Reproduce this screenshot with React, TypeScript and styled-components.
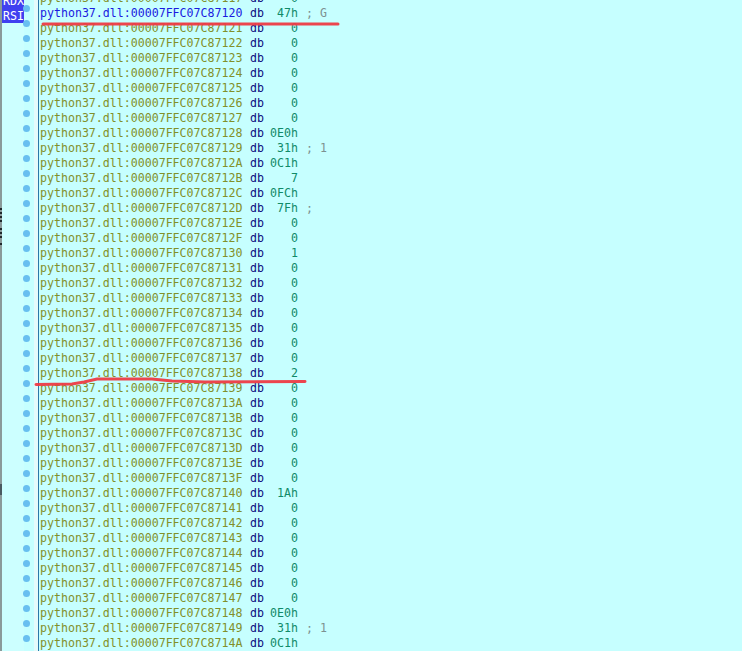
import React from "react"
import styled, { createGlobalStyle } from "styled-components"

interface Row {
  addr: string
  value: string
  comment?: string
}

const GlobalStyle = createGlobalStyle`
  html, body {
    margin: 0;
    padding: 0;
    background: #c6ffff;
  }
`

const values: Array<[string, string, string?]> = [
  ["87117", "0"],
  ["87120", "47h", "G"],
  ["87121", "0"],
  ["87122", "0"],
  ["87123", "0"],
  ["87124", "0"],
  ["87125", "0"],
  ["87126", "0"],
  ["87127", "0"],
  ["87128", "0E0h"],
  ["87129", "31h", "1"],
  ["8712A", "0C1h"],
  ["8712B", "7"],
  ["8712C", "0FCh"],
  ["8712D", "7Fh", ""],
  ["8712E", "0"],
  ["8712F", "0"],
  ["87130", "1"],
  ["87131", "0"],
  ["87132", "0"],
  ["87133", "0"],
  ["87134", "0"],
  ["87135", "0"],
  ["87136", "0"],
  ["87137", "0"],
  ["87138", "2"],
  ["87139", "0"],
  ["8713A", "0"],
  ["8713B", "0"],
  ["8713C", "0"],
  ["8713D", "0"],
  ["8713E", "0"],
  ["8713F", "0"],
  ["87140", "1Ah"],
  ["87141", "0"],
  ["87142", "0"],
  ["87143", "0"],
  ["87144", "0"],
  ["87145", "0"],
  ["87146", "0"],
  ["87147", "0"],
  ["87148", "0E0h"],
  ["87149", "31h", "1"],
  ["8714A", "0C1h"],
]

const rows: Row[] = values.map(([addr, value, comment]) => ({ addr, value, comment }))

// bits of the window behind, showing at the very left edge
const edgeMarks = [208, 212, 216, 220, 228, 232, 236, 243]

const App: React.FC = () => {
  return (
    <S.Page>
      <GlobalStyle />
      <S.Rail>
        <S.Registers>
          <S.Register>RDX</S.Register>
          <S.Register>RSI</S.Register>
        </S.Registers>
      </S.Rail>
      <S.Gutter>
        {rows.map((row) => (
          <S.DotSlot key={row.addr}>
            <S.Dot />
          </S.DotSlot>
        ))}
      </S.Gutter>
      <S.Listing>
        {rows.map((row, i) => (
          <S.Line key={row.addr}>
            <S.Address $current={i === 1}>python37.dll:00007FFC07C{row.addr}</S.Address>
            <S.Mnemonic>db</S.Mnemonic>
            <S.Value>{row.value}</S.Value>
            {row.comment !== undefined && <S.Comment>; {row.comment}</S.Comment>}
          </S.Line>
        ))}
      </S.Listing>
      <S.Marks viewBox="0 0 742 651">
        {edgeMarks.map((y) => (
          <rect key={y} x="0" y={y} width="2" height="2" fill="#20282c" />
        ))}
        <rect x="0" y="484" width="2" height="11" fill="#4a5a60" />
        <path d="M43 24 L338 24" stroke="#ee3b44" strokeWidth="3" fill="none" strokeLinecap="round" opacity="0.95" />
        <path
          d="M36 384.5 L72 384 L84 382 L97 379 L152 379 L172 381 L205 382 L305 381.5"
          stroke="#ee3b44"
          strokeWidth="3"
          fill="none"
          strokeLinecap="round"
          opacity="0.95"
        />
      </S.Marks>
    </S.Page>
  )
}

const S = {
  Page: styled.div`
    position: relative;
    display: flex;
    width: 742px;
    height: 651px;
    overflow: hidden;
    background: #c6ffff;
  `,
  Rail: styled.div`
    width: 24px;
    flex: none;
    box-sizing: border-box;
    border-left: 2px solid #8a9a9a;
    background: #ccffff;
  `,
  Registers: styled.div`
    margin-top: -7px;
    display: flex;
    flex-direction: column;
  `,
  Register: styled.div`
    height: 15px;
    padding-left: 1px;
    color: #ffffff;
    background: #4040f0;
    font: 11.6px/17px "DejaVu Sans Mono", monospace;
  `,
  Gutter: styled.div`
    width: 15px;
    flex: none;
    box-sizing: border-box;
    margin-left: -1px;
    margin-top: -14px;
    padding-bottom: 14px;
    border-right: 4px solid #e4fafb;
    display: flex;
    flex-direction: column;
  `,
  DotSlot: styled.div`
    height: 15px;
    flex: none;
    display: flex;
    align-items: center;
  `,
  Dot: styled.span`
    width: 7px;
    height: 7px;
    border-radius: 50%;
    background: #68bff0;
  `,
  Listing: styled.div`
    flex: 1;
    margin-top: -9px;
    padding-left: 1px;
    border-left: 1px solid #2a78a8;
  `,
  Line: styled.div`
    display: flex;
    height: 15px;
    white-space: pre;
    font: 11.6px/15px "DejaVu Sans Mono", monospace;
  `,
  Address: styled.span<{ $current?: boolean }>`
    width: 210px;
    color: ${(p) => (p.$current ? "#1a1ae0" : "#82902a")};
  `,
  Mnemonic: styled.span`
    width: 20px;
    color: #0c0c80;
  `,
  Value: styled.span`
    width: 28px;
    text-align: right;
    color: #108a68;
  `,
  Comment: styled.span`
    margin-left: 8px;
    color: #7d9090;
  `,
  Marks: styled.svg`
    position: absolute;
    left: 0;
    top: 0;
    width: 742px;
    height: 651px;
    pointer-events: none;
  `,
}

export default App
